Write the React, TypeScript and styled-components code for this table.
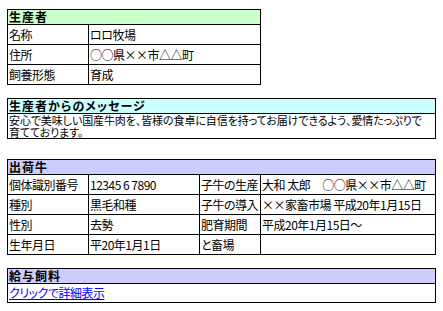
import React from "react";
import styled, { createGlobalStyle } from "styled-components";

const Global = createGlobalStyle`
  html, body { margin: 0; padding: 0; background: #fff; }
  body {
    font-family: "Noto Sans CJK JP", "Noto Sans", sans-serif;
    font-size: 12px;
    color: #000;
  }
`;

const Page = styled.div`
  padding: 9px 0 0 7px;
  display: flex;
  flex-direction: column;
  align-items: flex-start;
`;

const Table = styled.table<{ $w: number; $mb: number }>`
  border-collapse: collapse;
  width: ${(p) => p.$w}px;
  margin-bottom: ${(p) => p.$mb}px;
  table-layout: fixed;
  font-feature-settings: "palt";
`;

const HeadCell = styled.th<{ $bg: string }>`
  background: ${(p) => p.$bg};
  border: 1px solid #000;
  height: 14px;
  padding: 0 1px;
  text-align: left;
  font-weight: bold;
  font-size: 12px;
  line-height: 12px;
  letter-spacing: 1px;
`;

const Cell = styled.td<{ $h?: number }>`
  border: 1px solid #000;
  height: ${(p) => p.$h ?? 19}px;
  padding: 0 1px;
  font-size: 12px;
  line-height: 12px;
  letter-spacing: -0.5px;
  white-space: nowrap;
  overflow: hidden;
  vertical-align: middle;
`;

const MsgCell = styled.td`
  border: 1px solid #000;
  height: 24px;
  padding: 0 1px;
  font-size: 11px;
  line-height: 12px;
  letter-spacing: -0.1px;
  white-space: nowrap;
  vertical-align: middle;
`;

const MsgLine = styled.div`
  height: 12px;
  line-height: 12px;
`;

const Gap = styled.span`
  display: inline-block;
  width: 12px;
`;

const Link = styled.a`
  color: #0000ff;
  text-decoration: underline;
`;

export default function App() {
  return (
    <>
      <Global />
      <Page>
        <Table $w={254} $mb={13}>
          <colgroup>
            <col style={{ width: 81 }} />
            <col />
          </colgroup>
          <thead>
            <tr>
              <HeadCell colSpan={2} $bg="#ccffcc">生産者</HeadCell>
            </tr>
          </thead>
          <tbody>
            <tr>
              <Cell>名称</Cell>
              <Cell>ロロ牧場</Cell>
            </tr>
            <tr>
              <Cell>住所</Cell>
              <Cell>○○県××市△△町</Cell>
            </tr>
            <tr>
              <Cell>飼養形態</Cell>
              <Cell>育成</Cell>
            </tr>
          </tbody>
        </Table>

        <Table $w={429} $mb={20}>
          <thead>
            <tr>
              <HeadCell $bg="#ccffff">生産者からのメッセージ</HeadCell>
            </tr>
          </thead>
          <tbody>
            <tr>
              <MsgCell>
                <MsgLine>
                  安心で美味しい国産牛肉を、皆様の食卓に自信を持ってお届けできるよう、愛情たっぷりで
                </MsgLine>
                <MsgLine>育てております。</MsgLine>
              </MsgCell>
            </tr>
          </tbody>
        </Table>

        <Table $w={429} $mb={13}>
          <colgroup>
            <col style={{ width: 81 }} />
            <col style={{ width: 111 }} />
            <col style={{ width: 61 }} />
            <col />
          </colgroup>
          <thead>
            <tr>
              <HeadCell colSpan={4} $bg="#ccccff">出荷牛</HeadCell>
            </tr>
          </thead>
          <tbody>
            <tr>
              <Cell>個体識別番号</Cell>
              <Cell>12345 6 7890</Cell>
              <Cell>子牛の生産</Cell>
              <Cell>
                大和 太郎<Gap />○○県××市△△町
              </Cell>
            </tr>
            <tr>
              <Cell>種別</Cell>
              <Cell>黒毛和種</Cell>
              <Cell>子牛の導入</Cell>
              <Cell>××家畜市場 平成20年1月15日</Cell>
            </tr>
            <tr>
              <Cell>性別</Cell>
              <Cell>去勢</Cell>
              <Cell>肥育期間</Cell>
              <Cell>平成20年1月15日～</Cell>
            </tr>
            <tr>
              <Cell>生年月日</Cell>
              <Cell>平20年1月1日</Cell>
              <Cell>と畜場</Cell>
              <Cell></Cell>
            </tr>
          </tbody>
        </Table>

        <Table $w={429} $mb={0}>
          <thead>
            <tr>
              <HeadCell $bg="#ccccff">給与飼料</HeadCell>
            </tr>
          </thead>
          <tbody>
            <tr>
              <Cell $h={18}>
                <Link href="#">クリックで詳細表示</Link>
              </Cell>
            </tr>
          </tbody>
        </Table>
      </Page>
    </>
  );
}
